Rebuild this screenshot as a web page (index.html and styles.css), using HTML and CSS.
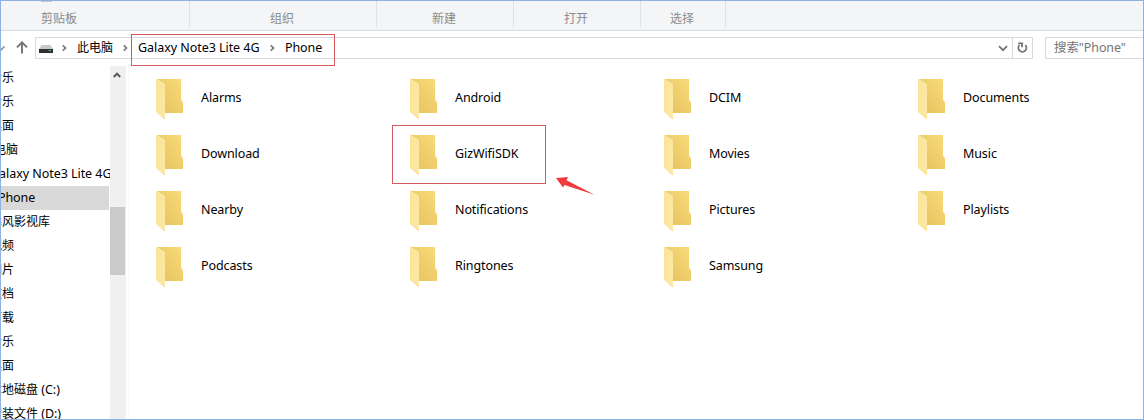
FILE: index.html
```html
<!DOCTYPE html>
<html lang="zh-CN">
<head>
<meta charset="utf-8">
<title>Phone</title>
<link rel="stylesheet" href="styles.css">
</head>
<body>
<svg class="defs" width="0" height="0" aria-hidden="true">
  <defs>
    <linearGradient id="back" x1="0" y1="1" x2="1" y2="0">
      <stop offset="0" stop-color="#e5c15d"/><stop offset=".55" stop-color="#efcf6c"/><stop offset="1" stop-color="#f8dc7c"/>
    </linearGradient>
    <linearGradient id="flap" x1="0" y1="0" x2="1" y2="1">
      <stop offset="0" stop-color="#fbe49b"/><stop offset="1" stop-color="#fce9a2"/>
    </linearGradient>
    <symbol id="folder" viewBox="0 0 28 42">
      <path d="M0 0H25V21L27 23V34H7V4Z" fill="url(#back)"/>
      <path d="M0 0L9 5V40L0 33Z" fill="url(#flap)"/>
      <path d="M0 33L9 39V41Z" fill="#f5dfa4" opacity=".7"/>
    </symbol>
  </defs>
</svg>
<div class="window">
  <div class="ribbon">
    <div class="group clipboard"><span class="remnant"></span>剪贴板</div>
    <div class="group organize">组织</div>
    <div class="group new">新建</div>
    <div class="group open">打开</div>
    <div class="group select">选择</div>
  </div>
  <div class="navbar">
    <svg class="recent" width="5" height="8" viewBox="0 0 5 8"><path d="M-1 5L0 6L3.5 2.5" fill="none" stroke="#858585" stroke-width="1.5"/></svg>
    <svg class="up" width="12" height="13" viewBox="0 0 12 13"><path d="M6 12.5V1.5M1 6.3L6 1.3L11 6.3" fill="none" stroke="#747474" stroke-width="1.9"/></svg>
    <div class="address">
      <svg class="drive" width="14" height="9" viewBox="0 0 14 9"><path d="M2.5 0H11.5L14 4H0Z" fill="#c9c9c9"/><path d="M0 4H14V8H0Z" fill="#303030"/><path d="M9.5 5.5H12" stroke="#4bb86a"/></svg>
      <svg class="chev c1" width="5" height="8" viewBox="0 0 5 8"><path d="M.8 1.3L3.5 4L.8 6.7" fill="none" stroke="#777" stroke-width="1.7"/></svg>
      <span class="crumb pc">此电脑</span>
      <svg class="chev c2" width="5" height="8" viewBox="0 0 5 8"><path d="M.8 1.3L3.5 4L.8 6.7" fill="none" stroke="#777" stroke-width="1.7"/></svg>
      <span class="crumb device">Galaxy Note3 Lite 4G</span>
      <svg class="chev c3" width="5" height="8" viewBox="0 0 5 8"><path d="M.8 1.3L3.5 4L.8 6.7" fill="none" stroke="#777" stroke-width="1.7"/></svg>
      <span class="crumb">Phone</span>
      <svg class="drop" width="10" height="7" viewBox="0 0 10 7"><path d="M1 1.2L5 5.2L9 1.2" fill="none" stroke="#777" stroke-width="1.9"/></svg>
      <div class="refresh"><svg width="11" height="12" viewBox="0 0 11 12"><path d="M2.5 3.1A4 4 0 1 0 8.3 3.1M1.2 1.3H5.1V5.3" fill="none" stroke="#707070" stroke-width="1.8"/></svg></div>
    </div>
    <div class="search">搜索"Phone"</div>
  </div>
  <div class="main">
    <ul class="tree">
      <li>音乐</li>
      <li>音乐</li>
      <li>桌面</li>
      <li class="root">此电脑</li>
      <li class="dev">Galaxy Note3 Lite 4G</li>
      <li class="current">Phone</li>
      <li>暴风影视库</li>
      <li>视频</li>
      <li>图片</li>
      <li>文档</li>
      <li>下载</li>
      <li>音乐</li>
      <li>桌面</li>
      <li>本地磁盘 <span class="letter">(C:)</span></li>
      <li>安装文件 <span class="letter">(D:)</span></li>
    </ul>
    <div class="scrollbar">
      <svg width="8" height="6" viewBox="0 0 8 6"><path d="M.8 5L4 1.6L7.2 5" fill="none" stroke="#555" stroke-width="1.9"/></svg>
      <div class="thumb"></div>
    </div>
    <div class="files">
      <div class="file"><svg class="folder"><use href="#folder"/></svg><span>Alarms</span></div>
      <div class="file"><svg class="folder"><use href="#folder"/></svg><span>Android</span></div>
      <div class="file"><svg class="folder"><use href="#folder"/></svg><span>DCIM</span></div>
      <div class="file"><svg class="folder"><use href="#folder"/></svg><span>Documents</span></div>
      <div class="file"><svg class="folder"><use href="#folder"/></svg><span>Download</span></div>
      <div class="file"><svg class="folder"><use href="#folder"/></svg><span>GizWifiSDK</span></div>
      <div class="file"><svg class="folder"><use href="#folder"/></svg><span>Movies</span></div>
      <div class="file"><svg class="folder"><use href="#folder"/></svg><span>Music</span></div>
      <div class="file"><svg class="folder"><use href="#folder"/></svg><span>Nearby</span></div>
      <div class="file"><svg class="folder"><use href="#folder"/></svg><span>Notifications</span></div>
      <div class="file"><svg class="folder"><use href="#folder"/></svg><span>Pictures</span></div>
      <div class="file"><svg class="folder"><use href="#folder"/></svg><span>Playlists</span></div>
      <div class="file"><svg class="folder"><use href="#folder"/></svg><span>Podcasts</span></div>
      <div class="file"><svg class="folder"><use href="#folder"/></svg><span>Ringtones</span></div>
      <div class="file"><svg class="folder"><use href="#folder"/></svg><span>Samsung</span></div>
    </div>
  </div>
  <div class="mark mark-path"></div>
  <div class="mark mark-folder"></div>
  <svg class="arrow" width="40" height="20" viewBox="0 0 40 20"><path d="M0 1L12 0L10.5 3.2L38.5 17.7L8.5 8L7 10.5Z" fill="#f03a3c"/></svg>
</div>
</body>
</html>
```
FILE: styles.css
```css
* { box-sizing: border-box; }
body {
  margin: 0;
  font: 12.5px/24px "Noto Sans", "Noto Sans CJK SC", sans-serif;
  letter-spacing: -0.1px;
  color: #000;
  background: #fff;
}
.defs { position: absolute; }
svg { display: block; flex: none; }
.window {
  position: relative;
  width: 1144px;
  height: 420px;
  border: 1px solid #8db2e3;
  overflow: hidden;
  display: flex;
  flex-direction: column;
}
.ribbon {
  display: flex;
  flex: none;
  height: 30px;
  background: #f4f5f7;
  border-bottom: 1px solid #d9dadc;
  color: #8b8b8b;
  font-size: 12px;
  letter-spacing: 0;
}
.group {
  height: 26px;
  border-right: 1px solid #dfe1e4;
  padding-top: 6px;
  text-align: center;
}
.clipboard { position: relative; width: 189px; padding-right: 72px; }
.remnant {
  position: absolute;
  left: 40px;
  top: 0;
  width: 11px;
  height: 1px;
  background: #c5c8cb;
}
.organize { width: 187px; padding-right: 2px; }
.new { width: 137px; padding-right: 2px; }
.open { width: 127px; padding-right: 2px; }
.select { width: 85px; padding-right: 2px; }
.navbar {
  display: flex;
  align-items: flex-start;
  flex: none;
  height: 35px;
  padding-top: 6px;
}
.recent { margin-top: 7px; }
.up { margin: 4px 0 0 10px; }
.address {
  display: flex;
  align-items: center;
  width: 998px;
  height: 22px;
  margin-left: 7px;
  border: 1px solid #d9d9d9;
  line-height: 20px;
}
.drive { margin: 3px 0 0 3px; }
.c1 { margin: 0 10px 0 9px; }
.c2 { margin: 0 10px 0 10px; }
.c3 { margin: 0 10px 0 11px; }
.pc { width: 36px; font-size: 12px; letter-spacing: 0; white-space: nowrap; }
.device { width: 121px; letter-spacing: -0.05px; white-space: nowrap; }
.drop { margin-left: auto; margin-right: 4px; }
.refresh {
  display: flex;
  align-items: center;
  justify-content: center;
  width: 20px;
  height: 20px;
  border-left: 1px solid #d9d9d9;
}
.search {
  flex: 1;
  height: 22px;
  margin-left: 12px;
  padding-left: 8px;
  border: 1px solid #d9d9d9;
  border-right: 0;
  line-height: 20px;
  color: #747474;
}
.main { display: flex; flex: 1; min-height: 0; }
.tree {
  width: 109px;
  margin: 0;
  padding: 0;
  list-style: none;
  overflow: hidden;
  flex: none;
  font-size: 12px;
  letter-spacing: 0;
}
.tree li { height: 24px; white-space: nowrap; text-indent: -11px; }
.tree .root { text-indent: -19px; }
.tree .dev { font-size: 12.5px; letter-spacing: -0.05px; text-indent: -11px; }
.tree .current { width: 108px; font-size: 12.5px; letter-spacing: -0.1px; text-indent: -3px; background: #d9d9d9; }
.letter { font-size: 12.5px; }
.scrollbar { width: 16px; background: #f0f0f0; flex: none; }
.scrollbar svg { margin: 6px 0 0 3px; }
.thumb { width: 15px; height: 68px; margin-top: 129px; background: #cacaca; }
.files {
  display: grid;
  grid-template-columns: repeat(4, 254px);
  grid-auto-rows: 56px;
  flex: 1;
  min-width: 0;
  margin-left: 2px;
  padding: 4px 0 0 27px;
  border-left: 1px solid #f7f7f7;
}
.file { display: flex; align-items: center; }
.folder { width: 28px; height: 42px; margin: 3px 17px 0 0; }
.mark { position: absolute; border: 1px solid #d65b5f; }
.mark-path { left: 130px; top: 33px; width: 204px; height: 32px; }
.mark-folder { left: 391px; top: 124px; width: 154px; height: 59px; }
.arrow { position: absolute; left: 555px; top: 176px; }
```
